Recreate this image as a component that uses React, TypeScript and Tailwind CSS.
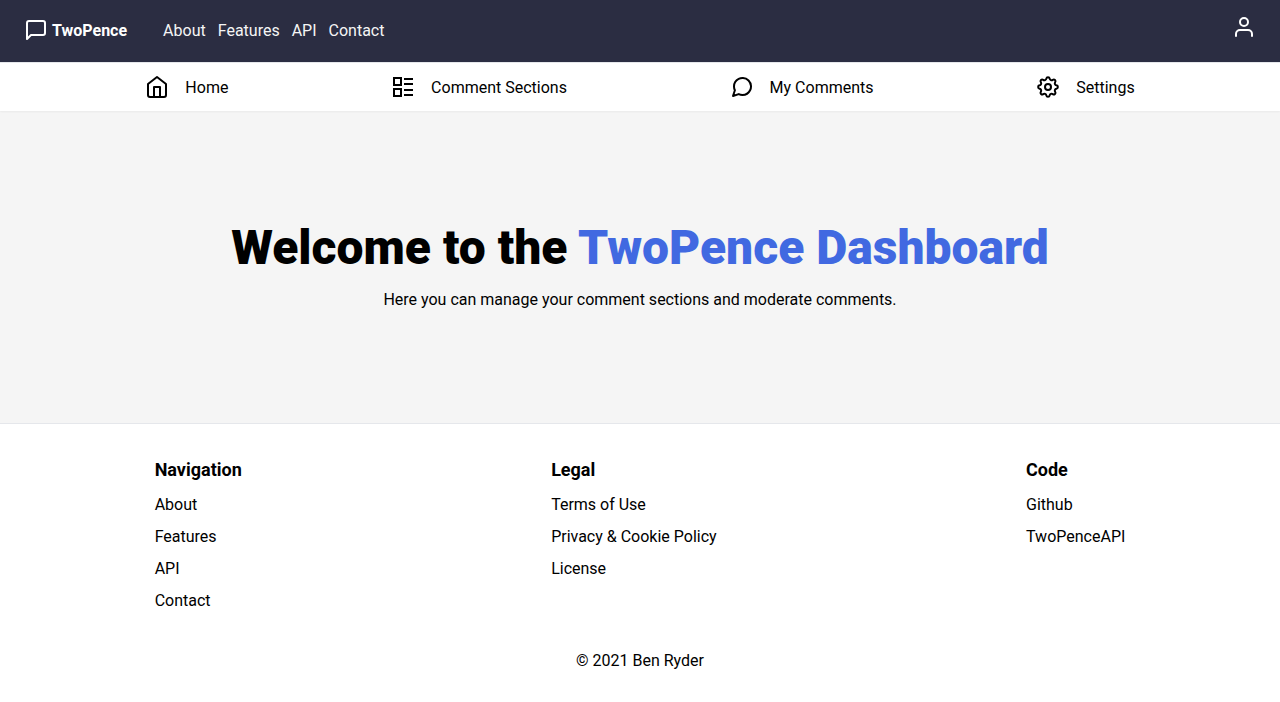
import { FiHome, FiMessageCircle, FiMessageSquare, FiUser } from "react-icons/fi";

type IconProps = { size?: number };

function ListIcon({ size = 24 }: IconProps) {
  return (
    <svg width={size} height={size} viewBox="0 0 24 24" fill="none" stroke="currentColor" strokeWidth="2" aria-hidden="true">
      <rect x="3" y="3" width="7" height="7" />
      <rect x="3" y="14" width="7" height="7" />
      <path d="M13 4h9M13 9h9M13 15h9M13 20h9" />
    </svg>
  );
}

function GearIcon({ size = 24 }: IconProps) {
  return (
    <svg width={size} height={size} viewBox="0 0 24 24" fill="none" stroke="currentColor" strokeWidth="2" strokeLinecap="round" strokeLinejoin="round" aria-hidden="true">
      <path d="M10.32 3.57A1.7 1.7 0 0 1 13.68 3.57A2 2 0 0 0 16.78 4.85A1.7 1.7 0 0 1 19.15 7.22A2 2 0 0 0 20.43 10.32A1.7 1.7 0 0 1 20.43 13.68A2 2 0 0 0 19.15 16.78A1.7 1.7 0 0 1 16.78 19.15A2 2 0 0 0 13.68 20.43A1.7 1.7 0 0 1 10.32 20.43A2 2 0 0 0 7.22 19.15A1.7 1.7 0 0 1 4.85 16.78A2 2 0 0 0 3.57 13.68A1.7 1.7 0 0 1 3.57 10.32A2 2 0 0 0 4.85 7.22A1.7 1.7 0 0 1 7.22 4.85A2 2 0 0 0 10.32 3.57Z" />
      <circle cx="12" cy="12" r="3" />
    </svg>
  );
}

const siteLinks = ["About", "Features", "API", "Contact"];

const sections = [
  { label: "Home", Icon: FiHome },
  { label: "Comment Sections", Icon: ListIcon },
  { label: "My Comments", Icon: FiMessageCircle },
  { label: "Settings", Icon: GearIcon },
];

const footerColumns = [
  { title: "Navigation", links: siteLinks },
  { title: "Legal", links: ["Terms of Use", "Privacy & Cookie Policy", "License"] },
  { title: "Code", links: ["Github", "TwoPenceAPI"] },
];

export default function App() {
  return (
    <div className="bg-white font-['Roboto',sans-serif] text-base leading-[26px] text-black">
      <header className="flex items-start justify-between border-b border-gray-200 bg-[#2b2d42] px-6 py-[15px] text-white">
        <div className="flex gap-9 py-[3px]">
          <a href="#" className="flex items-start gap-1 font-bold">
            <FiMessageSquare size={24} aria-hidden="true" />
            TwoPence
          </a>
          <nav aria-label="Site" className="flex gap-3">
            {siteLinks.map((label) => (
              <a key={label} href="#" className="text-[#f5f5f5]">{label}</a>
            ))}
          </nav>
        </div>
        <button type="button" aria-label="Account">
          <FiUser size={24} aria-hidden="true" />
        </button>
      </header>

      <nav aria-label="Dashboard" className="relative z-10 flex justify-around bg-white px-16 pt-3 pb-[10px] shadow-xs">
        {sections.map(({ label, Icon }) => (
          <a key={label} href="#" className="flex items-start gap-4">
            <Icon size={24} />
            {label}
          </a>
        ))}
      </nav>

      <main className="bg-[#f5f5f5] px-4 pt-28 pb-[110px] text-center">
        <h1 className="text-5xl leading-[50px] font-black">
          Welcome to the <span className="text-[#4169e1]">TwoPence Dashboard</span>
        </h1>
        <p className="mt-[14px]">Here you can manage your comment sections and moderate comments.</p>
      </main>

      <footer className="border-t border-gray-200 py-8">
        <div className="flex justify-around">
          {footerColumns.map(({ title, links }) => (
            <section key={title}>
              <h2 className="text-lg font-bold">{title}</h2>
              <ul className="mt-2 flex flex-col gap-[6px]">
                {links.map((label) => (
                  <li key={label}><a href="#">{label}</a></li>
                ))}
              </ul>
            </section>
          ))}
        </div>
        <p className="mt-[34px] text-center">© 2021 Ben Ryder</p>
      </footer>
    </div>
  );
}
